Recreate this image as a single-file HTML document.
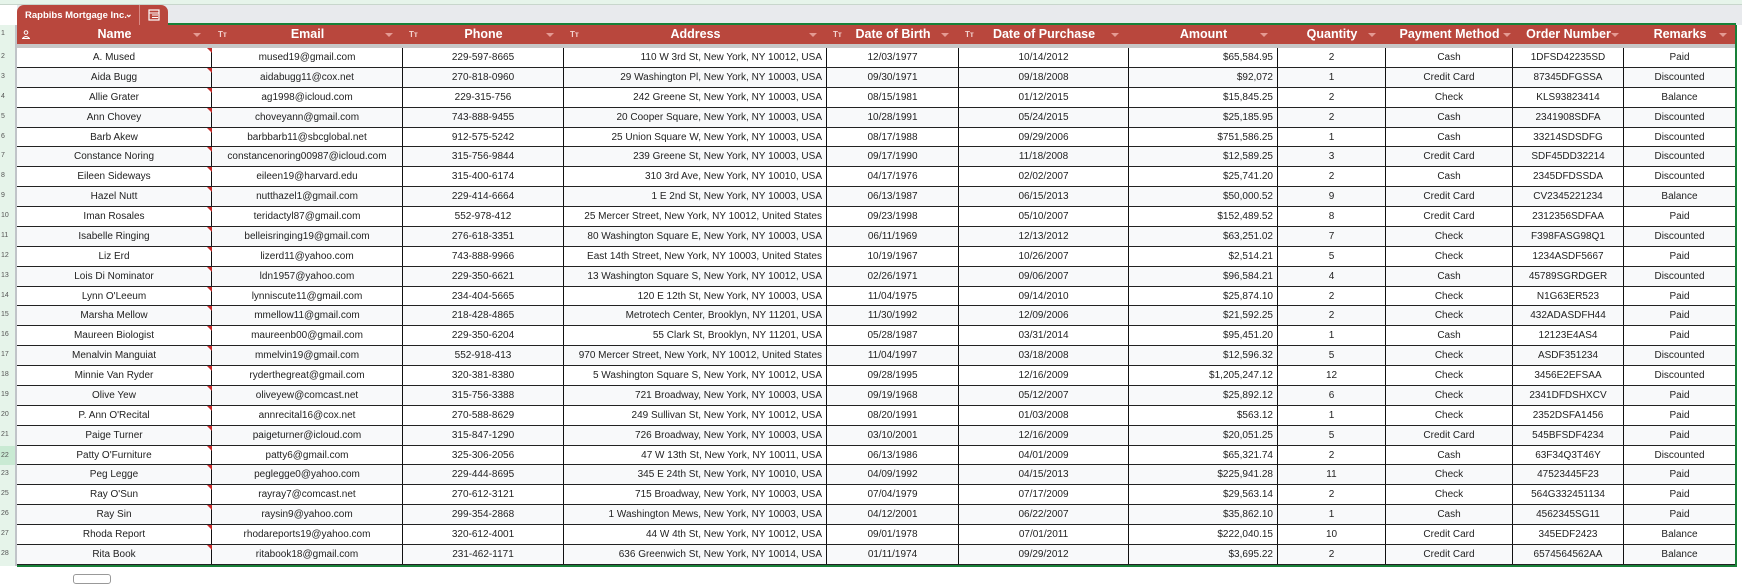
<!DOCTYPE html>
<html><head><meta charset="utf-8"><style>
*{margin:0;padding:0;box-sizing:border-box}
body{width:1742px;height:577px;overflow:hidden;background:#fff;font-family:"Liberation Sans",Arial,sans-serif;position:relative}
.topstrip{position:absolute;left:0;top:0;width:1742px;height:5px;background:#e6f4ea;border-bottom:1px solid #c8d6cc}
.gray{position:absolute;left:17px;top:5px;width:1725px;height:20px;background:#e8eaed}
.tab{position:absolute;left:17px;top:5px;width:151px;height:20px;background:#b9473d;border-radius:7px 7px 0 0;color:#fff;font-size:9.5px;font-weight:bold}
.tab .t{position:absolute;left:8px;top:5px}
.tab .ch{position:absolute;left:108px;top:4px;font-size:9px}
.tab .dv{position:absolute;left:122px;top:0;width:1px;height:20px;background:#d88a84}
.greenline{position:absolute;left:168px;top:23px;width:1568px;height:2px;background:#188038}
.rn{position:absolute;left:0;top:25px;width:17px;height:541px;background:#e6f4ea;border-right:2px solid #c0c4c8}
.rn div{position:absolute;left:0;width:15px;font-size:7px;color:#555;text-align:left;padding-left:1px}
.hdr{position:absolute;left:17px;top:25px;width:1719px;height:19px;background:#b9473d}
.hbar{position:absolute;left:17px;top:44px;width:1719px;height:4px;background:#c7c7c7}
.h{position:absolute;top:0;height:19px;color:#fff;font-weight:bold;font-size:12.5px;line-height:19px;text-align:center}
.tt{position:absolute;top:0;font-size:8px;color:#f3d3d0;line-height:19px;font-weight:bold}
.fl{position:absolute;top:8px;width:0;height:0;border-left:4px solid transparent;border-right:4px solid transparent;border-top:4px solid #e49a93}
.row{position:absolute;left:17px;width:1719px;height:19.88px;border-bottom:1px solid #222}
.row.a{background:#f8f9fa}
.c{position:absolute;top:0;height:19px;line-height:19px;font-size:10px;color:#222;text-align:center;border-right:1px solid #111;white-space:nowrap;overflow:hidden}
.r{text-align:right;padding-right:4px}
.tri{position:absolute;left:190px;top:0;width:0;height:0;border-left:5px solid transparent;border-top:5px solid #c62828}
.rb{position:absolute;left:1735px;top:25px;width:2px;height:541px;background:#188038}
.bb{position:absolute;left:17px;top:565px;width:1720px;height:2px;background:#188038}
.btn{position:absolute;left:73px;top:574px;width:38px;height:10px;border:1px solid #999;border-radius:3px;background:#fff}
</style></head><body>
<div class="topstrip"></div>
<div class="gray"></div>
<div class="tab"><span class="t">Rapbibs Mortgage Inc.</span><span class="ch">⌄</span><div class="dv"></div>
<svg style="position:absolute;left:131px;top:4px" width="12" height="12" viewBox="0 0 12 12"><rect x="1" y="1" width="10" height="10" fill="none" stroke="#fff" stroke-width="1.2"/><line x1="1" y1="4" x2="11" y2="4" stroke="#fff"/><line x1="4" y1="6" x2="10" y2="6" stroke="#fff"/><line x1="4" y1="8.5" x2="10" y2="8.5" stroke="#fff"/></svg></div>
<div class="greenline"></div>
<div class="hdr">
<svg style="position:absolute;left:5px;top:5px" width="8" height="9" viewBox="0 0 8 9"><circle cx="4" cy="2.5" r="1.8" fill="none" stroke="#fff" stroke-width="1"/><path d="M0.5 8.5 Q4 4.5 7.5 8.5Z" fill="none" stroke="#fff" stroke-width="1"/></svg>
<div class="h" style="left:0;width:195px">Name</div><div class="fl" style="left:176px"></div>
<div class="tt" style="left:201px">Tт</div><div class="h" style="left:195px;width:191px">Email</div><div class="fl" style="left:368px"></div>
<div class="tt" style="left:392px">Tт</div><div class="h" style="left:386px;width:161px">Phone</div><div class="fl" style="left:529px"></div>
<div class="tt" style="left:553px">Tт</div><div class="h" style="left:547px;width:263px">Address</div><div class="fl" style="left:792px"></div>
<div class="tt" style="left:816px">Tт</div><div class="h" style="left:810px;width:132px">Date of Birth</div><div class="fl" style="left:924px"></div>
<div class="tt" style="left:948px">Tт</div><div class="h" style="left:942px;width:170px">Date of Purchase</div><div class="fl" style="left:1094px"></div>
<div class="h" style="left:1112px;width:149px">Amount</div><div class="fl" style="left:1243px"></div>
<div class="h" style="left:1261px;width:108px">Quantity</div><div class="fl" style="left:1351px"></div>
<div class="h" style="left:1369px;width:127px">Payment Method</div><div class="fl" style="left:1486px"></div>
<div class="h" style="left:1496px;width:111px">Order Number</div><div class="fl" style="left:1594px"></div>
<div class="h" style="left:1607px;width:112px">Remarks</div><div class="fl" style="left:1702px"></div>
</div>
<div class="hbar"></div>
<div class="rn" id="rn"></div>
<div id="rows"></div>
<div class="rb"></div><div class="bb"></div>
<div class="btn"></div>
<script>
var L=[17,212,403,564,827,959,1129,1278,1386,1513,1624,1736];
var D=[
["A. Mused","mused19@gmail.com","229-597-8665","110 W 3rd St, New York, NY 10012, USA","12/03/1977","10/14/2012","$65,584.95","2","Cash","1DFSD42235SD","Paid"],
["Aida Bugg","aidabugg11@cox.net","270-818-0960","29 Washington Pl, New York, NY 10003, USA","09/30/1971","09/18/2008","$92,072","1","Credit Card","87345DFGSSA","Discounted"],
["Allie Grater","ag1998@icloud.com","229-315-756","242 Greene St, New York, NY 10003, USA","08/15/1981","01/12/2015","$15,845.25","2","Check","KLS93823414","Balance"],
["Ann Chovey","choveyann@gmail.com","743-888-9455","20 Cooper Square, New York, NY 10003, USA","10/28/1991","05/24/2015","$25,185.95","2","Cash","2341908SDFA","Discounted"],
["Barb Akew","barbbarb11@sbcglobal.net","912-575-5242","25 Union Square W, New York, NY 10003, USA","08/17/1988","09/29/2006","$751,586.25","1","Cash","33214SDSDFG","Discounted"],
["Constance Noring","constancenoring00987@icloud.com","315-756-9844","239 Greene St, New York, NY 10003, USA","09/17/1990","11/18/2008","$12,589.25","3","Credit Card","SDF45DD32214","Discounted"],
["Eileen Sideways","eileen19@harvard.edu","315-400-6174","310 3rd Ave, New York, NY 10010, USA","04/17/1976","02/02/2007","$25,741.20","2","Cash","2345DFDSSDA","Discounted"],
["Hazel Nutt","nutthazel1@gmail.com","229-414-6664","1 E 2nd St, New York, NY 10003, USA","06/13/1987","06/15/2013","$50,000.52","9","Credit Card","CV2345221234","Balance"],
["Iman Rosales","teridactyl87@gmail.com","552-978-412","25 Mercer Street, New York, NY 10012, United States","09/23/1998","05/10/2007","$152,489.52","8","Credit Card","2312356SDFAA","Paid"],
["Isabelle Ringing","belleisringing19@gmail.com","276-618-3351","80 Washington Square E, New York, NY 10003, USA","06/11/1969","12/13/2012","$63,251.02","7","Check","F398FASG98Q1","Discounted"],
["Liz Erd","lizerd11@yahoo.com","743-888-9966","East 14th Street, New York, NY 10003, United States","10/19/1967","10/26/2007","$2,514.21","5","Check","1234ASDF5667","Paid"],
["Lois Di Nominator","ldn1957@yahoo.com","229-350-6621","13 Washington Square S, New York, NY 10012, USA","02/26/1971","09/06/2007","$96,584.21","4","Cash","45789SGRDGER","Discounted"],
["Lynn O'Leeum","lynniscute11@gmail.com","234-404-5665","120 E 12th St, New York, NY 10003, USA","11/04/1975","09/14/2010","$25,874.10","2","Check","N1G63ER523","Paid"],
["Marsha Mellow","mmellow11@gmail.com","218-428-4865","Metrotech Center, Brooklyn, NY 11201, USA","11/30/1992","12/09/2006","$21,592.25","2","Check","432ADASDFH44","Paid"],
["Maureen Biologist","maureenb00@gmail.com","229-350-6204","55 Clark St, Brooklyn, NY 11201, USA","05/28/1987","03/31/2014","$95,451.20","1","Cash","12123E4AS4","Paid"],
["Menalvin Manguiat","mmelvin19@gmail.com","552-918-413","970 Mercer Street, New York, NY 10012, United States","11/04/1997","03/18/2008","$12,596.32","5","Check","ASDF351234","Discounted"],
["Minnie Van Ryder","ryderthegreat@gmail.com","320-381-8380","5 Washington Square S, New York, NY 10012, USA","09/28/1995","12/16/2009","$1,205,247.12","12","Check","3456E2EFSAA","Discounted"],
["Olive Yew","oliveyew@comcast.net","315-756-3388","721 Broadway, New York, NY 10003, USA","09/19/1968","05/12/2007","$25,892.12","6","Check","2341DFDSHXCV","Paid"],
["P. Ann O'Recital","annrecital16@cox.net","270-588-8629","249 Sullivan St, New York, NY 10012, USA","08/20/1991","01/03/2008","$563.12","1","Check","2352DSFA1456","Paid"],
["Paige Turner","paigeturner@icloud.com","315-847-1290","726 Broadway, New York, NY 10003, USA","03/10/2001","12/16/2009","$20,051.25","5","Credit Card","545BFSDF4234","Paid"],
["Patty O'Furniture","patty6@gmail.com","325-306-2056","47 W 13th St, New York, NY 10011, USA","06/13/1986","04/01/2009","$65,321.74","2","Cash","63F34Q3T46Y","Discounted"],
["Peg Legge","peglegge0@yahoo.com","229-444-8695","345 E 24th St, New York, NY 10010, USA","04/09/1992","04/15/2013","$225,941.28","11","Check","47523445F23","Paid"],
["Ray O'Sun","rayray7@comcast.net","270-612-3121","715 Broadway, New York, NY 10003, USA","07/04/1979","07/17/2009","$29,563.14","2","Check","564G332451134","Paid"],
["Ray Sin","raysin9@yahoo.com","299-354-2868","1 Washington Mews, New York, NY 10003, USA","04/12/2001","06/22/2007","$35,862.10","1","Cash","4562345SG11","Paid"],
["Rhoda Report","rhodareports19@yahoo.com","320-612-4001","44 W 4th St, New York, NY 10012, USA","09/01/1978","07/01/2011","$222,040.15","10","Credit Card","345EDF2423","Balance"],
["Rita Book","ritabook18@gmail.com","231-462-1171","636 Greenwich St, New York, NY 10014, USA","01/11/1974","09/29/2012","$3,695.22","2","Credit Card","6574564562AA","Balance"]];
var h="",rn='<div style="top:5px">1</div>';var nums=[2,3,4,5,6,7,8,9,10,11,12,13,14,15,16,17,18,19,20,21,22,23,25,26,27,28];
var H=19.88;
D.forEach(function(r,i){var top=48+i*H;h+='<div class="row'+(i%2?' a':'')+'" style="top:'+top+'px">';
for(var j=0;j<11;j++){var al=(j==3||j==6)?' r':'';h+='<div class="c'+al+'" style="left:'+(L[j]-17)+'px;width:'+(L[j+1]-L[j])+'px">'+r[j]+'</div>';}
h+='<div class="tri"></div></div>';
rn+='<div style="top:'+(top-25+5)+'px;'+(nums[i]==22?'background:#c9ead3;height:19px;top:'+(top-25)+'px;line-height:19px':'')+'">'+nums[i]+'</div>';});
document.getElementById('rows').innerHTML=h;document.getElementById('rn').innerHTML=rn;
</script>
</body></html>
